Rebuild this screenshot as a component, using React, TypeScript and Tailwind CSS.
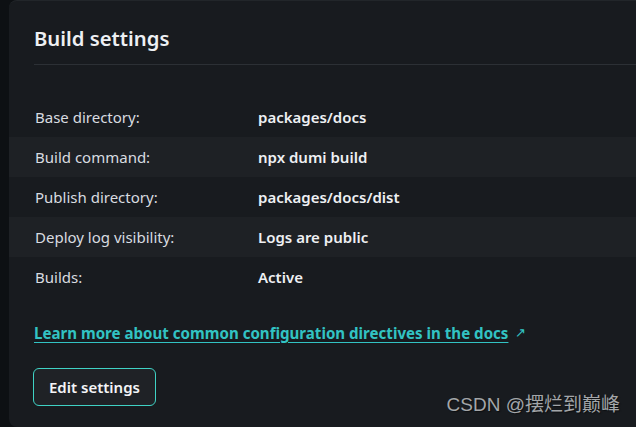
import React from "react";

const rows: [string, string][] = [
  ["Base directory:", "packages/docs"],
  ["Build command:", "npx dumi build"],
  ["Publish directory:", "packages/docs/dist"],
  ["Deploy log visibility:", "Logs are public"],
  ["Builds:", "Active"],
];

export default function App() {
  return (
    <div
      className="relative w-[636px] h-[427px] bg-[#0d1013] overflow-hidden flex"
      style={{ fontFamily: '"Noto Sans", "Open Sans", sans-serif' }}
    >
      <div className="ml-[9px] flex-1 bg-[#181b1f] rounded-tl-[8px] rounded-bl-[8px] border-t border-[#22262a] flex flex-col">
        <div className="ml-[25px] pt-[23px] pb-[12px] border-b border-[#2c3035]">
          <h2 className="text-[20.3px] leading-[28px] font-semibold text-[#eef0f3]">Build settings</h2>
        </div>
        <div className="mt-[32px] flex flex-col">
          {rows.map(([k, v], i) => (
            <div
              key={k}
              className={`h-[40px] flex items-center pl-[26px] text-[15px] ${i % 2 === 1 ? "bg-[#1e2125]" : ""}`}
            >
              <div className="w-[223px] text-[#d9dce0]">{k}</div>
              <div className="font-semibold text-[#eef0f3]">{v}</div>
            </div>
          ))}
        </div>
        <div className="mt-[24px] pl-[25px] flex items-center h-[24px]">
          <a className="text-[15.1px] font-bold text-[#32c3c3] underline underline-offset-[3px] decoration-[1px]">
            Learn more about common configuration directives in the docs
          </a>
          <span className="ml-[7px] text-[#32c3c3] text-[13px]">↗</span>
        </div>
        <div className="mt-[23px] pl-[24px]">
          <button className="h-[38px] px-[15px] rounded-[6px] border border-[#3fd2c4] bg-[#1f2226] text-[15px] font-semibold text-[#f4f5f7]">
            Edit settings
          </button>
        </div>
      </div>
      <div
        className="absolute right-[16px] bottom-[8px] text-[19px] text-[#a3a6a9]"
        style={{ fontFamily: '"Liberation Sans", "Noto Sans CJK SC", sans-serif', textShadow: "1px 1px 1px rgba(0,0,0,0.5)" }}
      >
        CSDN @摆烂到巅峰
      </div>
    </div>
  );
}
